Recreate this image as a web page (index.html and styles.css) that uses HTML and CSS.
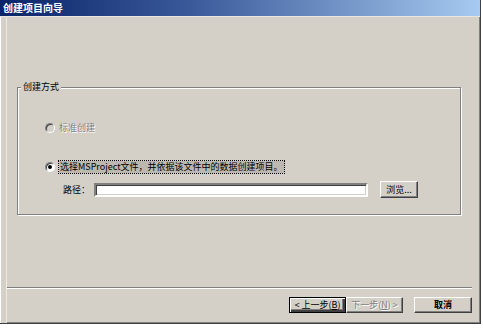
FILE: index.html
```html
<!DOCTYPE html>
<html>
<head>
    <link rel="stylesheet" href="styles.css">
</head>
<body>
    <div class="window">
        <div class="titlebar">创建项目向导</div>

        <div class="client">
            <fieldset class="group">
                <legend>创建方式</legend>

                <div class="option disabled">
                    <span class="radio"></span>
                    <span class="label">标准创建</span>
                </div>

                <div class="option">
                    <span class="radio checked"></span>
                    <span class="label focus">选择MSProject文件，并依据该文件中的数据创建项目。</span>
                </div>

                <div class="path-row">
                    <span class="path-label">路径：</span>
                    <input class="path-input" type="text">
                    <button class="btn btn-browse">浏览...</button>
                </div>
            </fieldset>

            <div class="separator"></div>

            <div class="btn-row">
                <button class="btn btn-default">&lt; 上一步(<u>B</u>)</button>
                <button class="btn btn-disabled">下一步(<u>N</u>) &gt;</button>
                <button class="btn btn-cancel">取消</button>
            </div>
        </div>
    </div>
</body>
</html>
```

FILE: styles.css
```css
body {
    margin: 0;
    background-color: #ffffff;
    font-family: "Noto Sans CJK SC", "DejaVu Sans", sans-serif;
    font-size: 9px;
    color: #000000;
}

.window {
    width: 480px;
    height: 323px;
    background-color: #d4d0c8;
    border-right: 1px solid #404040;
    border-bottom: 1px solid #404040;
    box-shadow: inset -1px -1px 0 #808080;
}

.titlebar {
    height: 16px;
    line-height: 16px;
    padding-left: 3px;
    font-size: 10px;
    font-weight: bold;
    color: #ffffff;
    background: linear-gradient(to right, #0a246a, #3a5a9a 40%, #a6caf0);
    border-bottom: 1px solid #e8e6e0;
}

.client {
    height: 306px;
    box-shadow: inset 1px 0 0 #ffffff, inset 6px 0 0 #d4d0c8, inset 7px 0 0 #ece9e2;
    overflow: hidden;
}

.group {
    margin: 64px 19px 0 17px;
    padding: 29px 0 16px 0;
    border: 1px solid #808080;
    box-shadow: 1px 1px 0 #ffffff, inset 1px 1px 0 #ffffff;
}

.group legend {
    margin-left: 3px;
    padding: 0 2px;
    line-height: 12px;
    background-color: #d4d0c8;
}

.option {
    display: flex;
    align-items: center;
    height: 12px;
    margin-left: 27px;
}

.option + .option {
    margin-top: 27px;
}

.radio {
    width: 8px;
    height: 8px;
    margin-right: 4px;
    border-radius: 50%;
    background-color: #ffffff;
    border: 1px solid;
    border-color: #808080 #ffffff #ffffff #808080;
    box-shadow: inset 1px 1px 0 #404040;
    position: relative;
}

.radio.checked::after {
    content: "";
    position: absolute;
    left: 2px;
    top: 2px;
    width: 4px;
    height: 4px;
    border-radius: 50%;
    background-color: #000000;
}

.disabled .radio {
    background-color: #d4d0c8;
}

.disabled .label {
    color: #808080;
    text-shadow: 1px 1px 0 #ffffff;
}

.label {
    line-height: 12px;
}

.focus {
    padding: 0 1px;
    background-color: #bcb8b0;
    outline: 1px dotted #000000;
}

.path-row {
    display: flex;
    align-items: center;
    height: 17px;
    margin: 8px 0 0 45px;
}

.path-label {
    width: 31px;
}

.path-input {
    width: 270px;
    height: 10px;
    padding: 0;
    margin: 0 12px 0 0;
    background-color: #ffffff;
    border: 2px solid;
    border-color: #808080 #ffffff #ffffff #808080;
    box-shadow: inset 1px 1px 0 #404040, inset -1px -1px 0 #d4d0c8;
    outline: none;
}

.btn {
    height: 16px;
    padding: 0;
    font-family: inherit;
    font-size: 9px;
    line-height: 12px;
    color: #000000;
    background-color: #d4d0c8;
    border: 1px solid;
    border-color: #ffffff #404040 #404040 #ffffff;
    box-shadow: inset -1px -1px 0 #808080;
    cursor: pointer;
}

.btn-browse {
    width: 38px;
    height: 17px;
}

.separator {
    height: 1px;
    margin: 72px 8px 0 7px;
    background-color: #808080;
    border-bottom: 1px solid #ffffff;
}

.btn-row {
    display: flex;
    justify-content: flex-end;
    margin-top: 8px;
    padding-right: 8px;
}

.btn-row .btn {
    width: 57px;
}

.btn-default {
    border: 1px solid #000000;
    box-shadow: inset 1px 1px 0 #ffffff, inset -2px -2px 0 #404040, inset -3px -3px 0 #808080;
}

.btn-disabled {
    color: #808080;
    text-shadow: 1px 1px 0 #ffffff;
}

.btn-row .btn-cancel {
    width: 58px;
    margin-left: 11px;
    font-weight: bold;
}
```
